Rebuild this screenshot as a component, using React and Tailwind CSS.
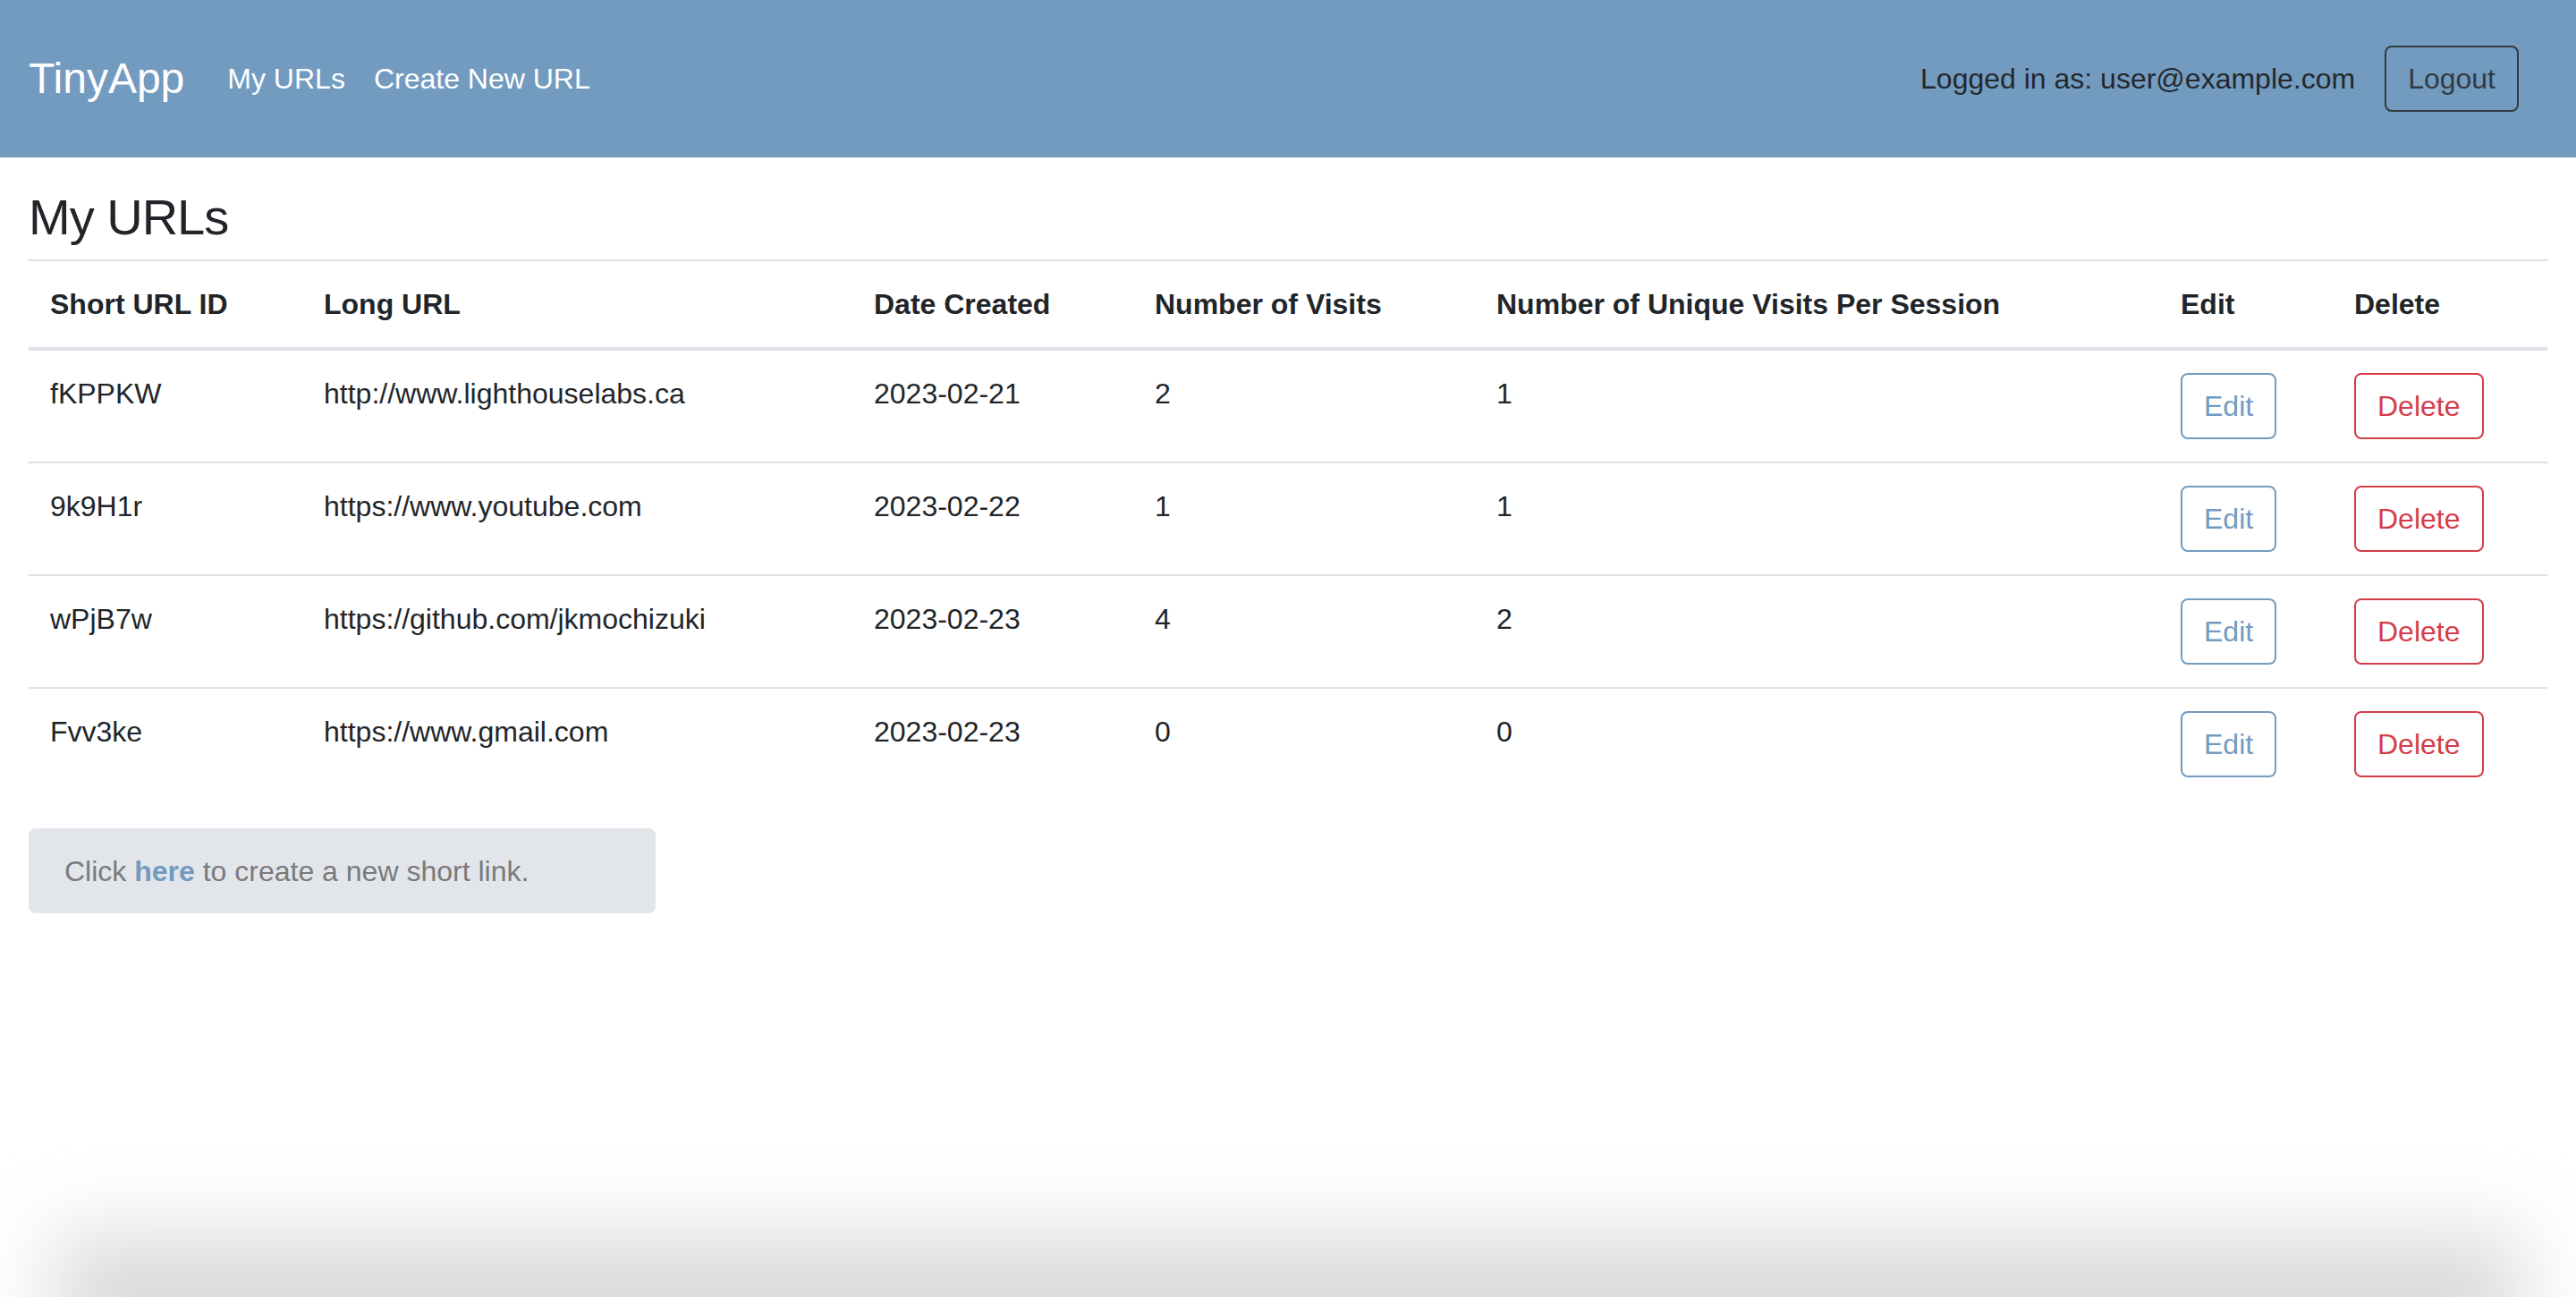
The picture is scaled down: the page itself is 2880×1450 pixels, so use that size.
const urls = [
  { id: "fKPPKW", longURL: "http://www.lighthouselabs.ca", date: "2023-02-21", visits: 2, unique: 1 },
  { id: "9k9H1r", longURL: "https://www.youtube.com", date: "2023-02-22", visits: 1, unique: 1 },
  { id: "wPjB7w", longURL: "https://github.com/jkmochizuki", date: "2023-02-23", visits: 4, unique: 2 },
  { id: "Fvv3ke", longURL: "https://www.gmail.com", date: "2023-02-23", visits: 0, unique: 0 },
];

const Header = () => {
  return (
    <nav className="flex items-center h-[176px] bg-[#729bbf] pl-8 pr-16">
      <a className="text-[48px] leading-[72px] text-white mr-8">TinyApp</a>
      <div className="flex items-center">
        <a className="px-4 text-[32px] leading-[48px] text-white">My URLs</a>
        <a className="px-4 text-[32px] leading-[48px] text-white">Create New URL</a>
      </div>
      <div className="ml-auto flex items-center gap-[33px]">
        <span className="text-[32px] leading-[48px] text-[#24282c]">
          Logged in as: user@example.com
        </span>
        <button className="flex items-center h-[74px] px-6 border-2 border-[#343a40] rounded-lg text-[32px] leading-[48px] text-[#343a40]">
          Logout
        </button>
      </div>
    </nav>
  );
};

const App = () => {
  const th = "pt-6 pb-6 px-6 text-left align-top font-bold leading-[48px] border-t-2 border-b-4 border-[#dee2e6]";
  const td = "pt-6 pb-6 px-6 align-top leading-[48px] border-t-2 border-[#dee2e6]";
  const tdBtn = "pt-[25px] pb-[25px] px-6 align-top border-t-2 border-[#dee2e6]";

  return (
    <div
      className="relative h-[1450px] overflow-hidden bg-white text-[#212529]"
      style={{ fontFamily: '"Liberation Sans", Arial, sans-serif' }}
    >
      <Header />

      <main className="px-8 pt-[33px]">
        <h3 className="text-[56px] leading-[67px] font-medium tracking-[-1px] mb-[14px]">My URLs</h3>

        <table className="w-full table-fixed border-collapse text-[32px] mb-8">
          <colgroup>
            <col className="w-[306px]" />
            <col className="w-[615px]" />
            <col className="w-[314px]" />
            <col className="w-[382px]" />
            <col className="w-[765px]" />
            <col className="w-[194px]" />
            <col className="w-[240px]" />
          </colgroup>
          <thead>
            <tr>
              <th className={th}>Short URL ID</th>
              <th className={th}>Long URL</th>
              <th className={th}>Date Created</th>
              <th className={th}>Number of Visits</th>
              <th className={th}>Number of Unique Visits Per Session</th>
              <th className={th}>Edit</th>
              <th className={th}>Delete</th>
            </tr>
          </thead>
          <tbody>
            {urls.map((url) => (
              <tr key={url.id}>
                <td className={td}>{url.id}</td>
                <td className={td}>{url.longURL}</td>
                <td className={td}>{url.date}</td>
                <td className={td}>{url.visits}</td>
                <td className={td}>{url.unique}</td>
                <td className={tdBtn}>
                  <button className="flex items-center h-[74px] px-6 border-2 border-[#729bbf] rounded-lg text-[32px] text-[#729bbf]">
                    Edit
                  </button>
                </td>
                <td className={tdBtn}>
                  <button className="flex items-center h-[74px] px-6 border-2 border-[#d43d48] rounded-lg text-[32px] text-[#d43d48]">
                    Delete
                  </button>
                </td>
              </tr>
            ))}
          </tbody>
        </table>

        {/* New link hint */}
        <div className="w-[701px] h-[95px] flex items-center px-10 rounded-lg bg-[#e2e6ea] text-[32px] leading-[48px] text-[#7a7a7a]">
          <span>
            Click <a className="font-bold text-[#729bbf]">here</a> to create a new short link.
          </span>
        </div>
      </main>

      {/* window shadow at the bottom edge */}
      <div className="absolute bottom-[-80px] left-[60px] right-[60px] h-[150px] bg-[#dadada] blur-[45px]" />
    </div>
  );
};

export default App;
